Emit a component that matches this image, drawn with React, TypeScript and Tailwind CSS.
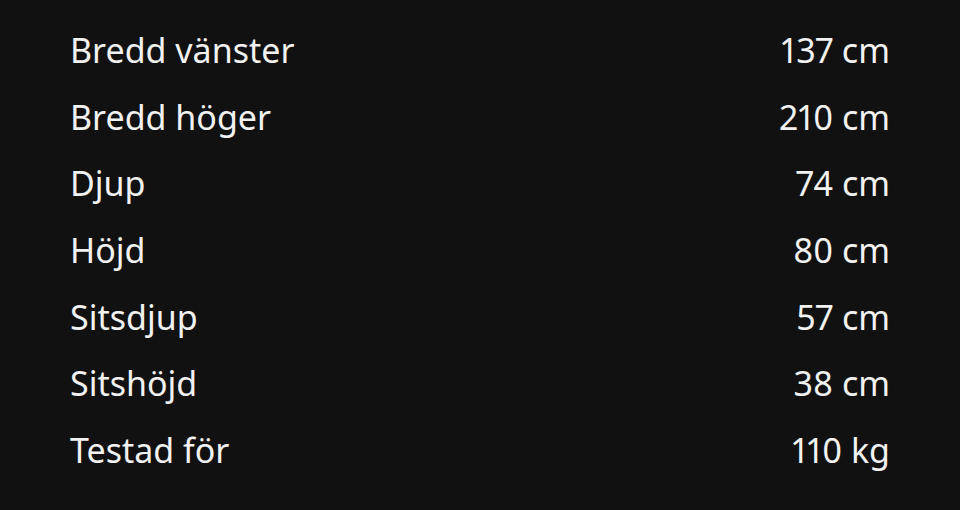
import React from "react";

const rows: [string, string][] = [
  ["Bredd vänster", "137 cm"],
  ["Bredd höger", "210 cm"],
  ["Djup", "74 cm"],
  ["Höjd", "80 cm"],
  ["Sitsdjup", "57 cm"],
  ["Sitshöjd", "38 cm"],
  ["Testad för", "110 kg"],
];

export default function App() {
  return (
    <div className="w-[960px] h-[510px] bg-[#111111] text-[#f2f2f2] pt-[17px] pl-[70px] pr-[70px] font-['Noto_Sans',sans-serif]">
      {rows.map(([k, v]) => (
        <div key={k} className="flex justify-between h-[66.67px] text-[34px] leading-[66.67px]">
          <span>{k}</span>
          <span className="proportional-nums">{v}</span>
        </div>
      ))}
    </div>
  );
}
